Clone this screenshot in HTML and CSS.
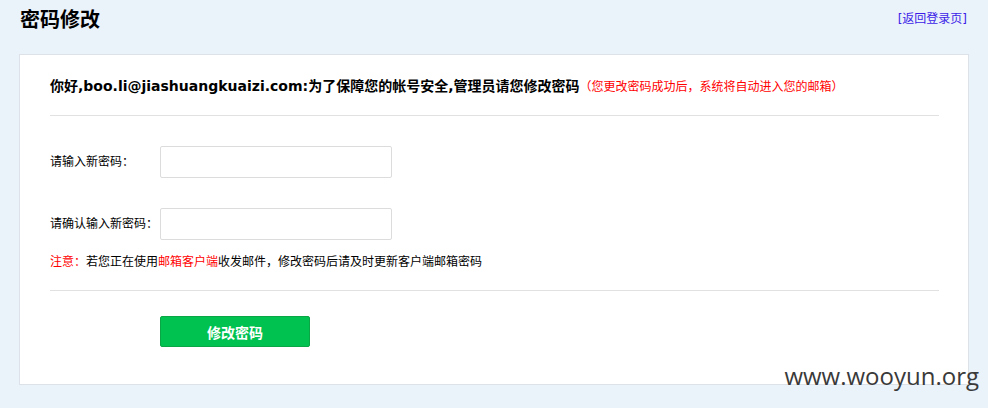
FILE: index.html
```html
<!DOCTYPE html>
<html>
<head>
  <meta charset="utf-8">
  <title>密码修改</title>
  <link rel="stylesheet" href="styles.css">
</head>
<body>
  <div class="header">
    <h1>密码修改</h1>
    <a class="back-link" href="#">[返回登录页]</a>
  </div>
  <div class="card">
    <p class="greeting">你好,boo.li@jiashuangkuaizi.com:为了保障您的帐号安全,管理员请您修改密码<span class="tip">（您更改密码成功后，系统将自动进入您的邮箱）</span></p>
    <div class="divider"></div>
    <form class="pwd-form">
      <div class="row">
        <label for="pwd">请输入新密码：</label>
        <input type="password" id="pwd">
      </div>
      <div class="row row-second">
        <label for="pwd2">请确认输入新密码：</label>
        <input type="password" id="pwd2">
      </div>
      <p class="note"><span class="red">注意：</span>若您正在使用<span class="red">邮箱客户端</span>收发邮件，修改密码后请及时更新客户端邮箱密码</p>
      <div class="divider divider-low"></div>
      <button type="submit">修改密码</button>
    </form>
  </div>
  <div class="watermark">www.wooyun.org</div>
</body>
</html>
```

FILE: styles.css
```css
body {
  margin: 0;
  background-color: #eaf2fa;
  font-family: "DejaVu Sans", "Noto Sans CJK SC", sans-serif;
  font-size: 12px;
  color: #000;
  height: 408px;
  position: relative;
  overflow: hidden;
}

.header {
  display: flex;
  justify-content: space-between;
  align-items: flex-start;
  height: 54px;
  padding: 0 21px 0 20px;
}

.header h1 {
  margin: 6px 0 0;
  font-size: 20px;
  line-height: 28px;
  font-weight: bold;
}

.back-link {
  margin-top: 10px;
  line-height: 18px;
  color: #3d1ee8;
  text-decoration: none;
}

.card {
  margin: 0 19px;
  background-color: #fff;
  border: 1px solid #dde2e8;
  padding: 21px 29px 37px 30px;
}

.greeting {
  margin: 0;
  height: 20px;
  font-size: 14px;
  line-height: 20px;
  font-weight: bold;
}

.tip {
  font-size: 12px;
  line-height: 12px;
  font-weight: normal;
  color: #f00;
}

.divider {
  height: 1px;
  background-color: #e1e1e1;
  margin-top: 19px;
}

.row {
  display: flex;
  align-items: center;
  margin-top: 30px;
}

.row label {
  width: 110px;
  line-height: 18px;
}

.row input {
  width: 232px;
  height: 32px;
  box-sizing: border-box;
  border: 1px solid #dcdcdc;
  border-radius: 2px;
  padding: 0 6px;
  margin: 0;
}

.note {
  margin: 13px 0 0;
  line-height: 18px;
}

.red {
  color: #f00;
}

.pwd-form button {
  display: block;
  margin: 25px 0 0 110px;
  width: 150px;
  height: 31px;
  background-color: #00c250;
  border: 1px solid #0aa645;
  border-radius: 2px;
  color: #fff;
  font-family: "Noto Sans CJK SC", sans-serif;
  font-size: 14px;
  font-weight: bold;
  cursor: pointer;
}

.watermark {
  position: absolute;
  right: 9px;
  top: 361px;
  font-family: "Open Sans", sans-serif;
  font-size: 24px;
  line-height: 30px;
  color: #3a3a3a;
}
```
